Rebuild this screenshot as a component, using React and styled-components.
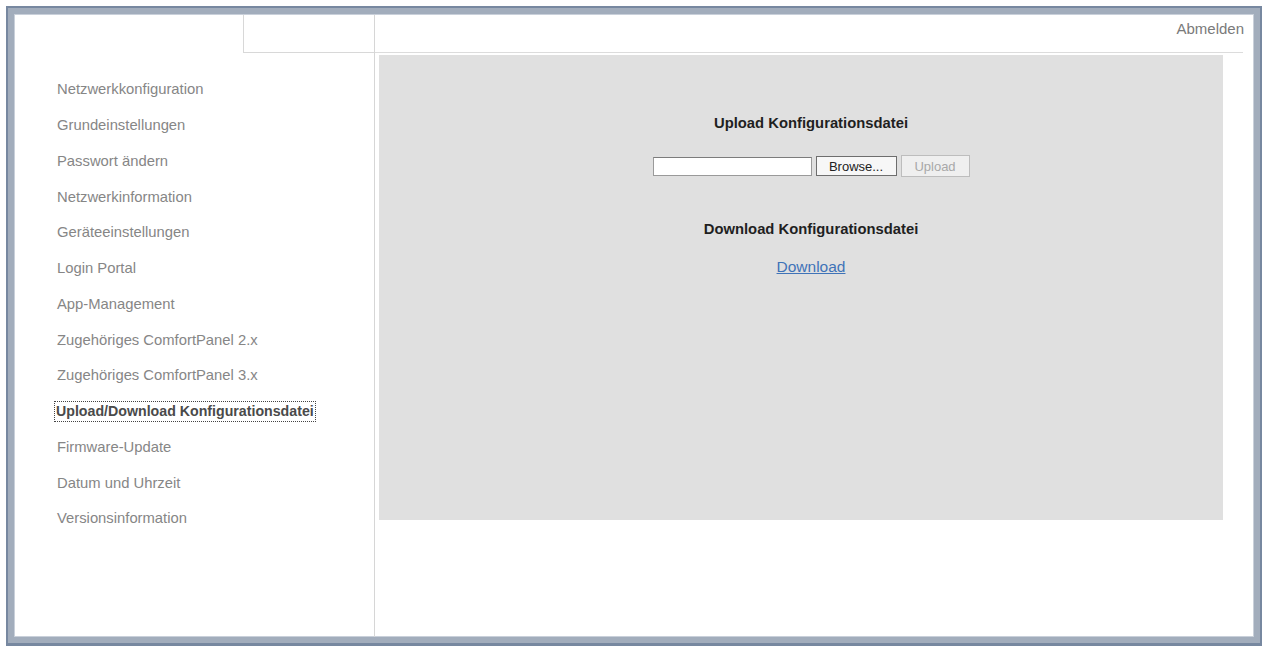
import React from "react";
import styled, { createGlobalStyle } from "styled-components";

const Global = createGlobalStyle`
  html, body { margin: 0; padding: 0; background: #ffffff; }
  body { font-family: "Liberation Sans", Arial, sans-serif; }
  * { box-sizing: border-box; }
`;

const Page = styled.div`
  width: 1268px;
  height: 648px;
  padding: 6px 6px 2px 6px;
  background: #ffffff;
`;

const Frame = styled.div`
  width: 100%;
  height: 100%;
  display: flex;
  border-style: solid;
  border-color: #7788a0;
  border-width: 2px 2px 3px 2px;
  box-shadow: inset 0 0 0 6px #a2adbc, inset 0 0 0 7px #c9d0da;
  padding: 7px 7px 6px 7px;
  background: #ffffff;
`;

const Sidebar = styled.aside`
  width: 360px;
  flex: none;
  display: flex;
  flex-direction: column;
  border-right: 1px solid #d6d6d6;
`;

const SideHead = styled.div`
  height: 38px;
  display: flex;
  justify-content: flex-end;
`;

const Tab = styled.div`
  width: 131px;
  height: 38px;
  border-left: 1px solid #d8d8d8;
  border-bottom: 1px solid #d8d8d8;
`;

const Nav = styled.nav`
  display: flex;
  flex-direction: column;
  padding: 19px 0 0 42px;
`;

const NavItem = styled.div`
  height: 35.75px;
  display: flex;
  align-items: center;
`;

const NavLabel = styled.span`
  display: inline-block;
  white-space: nowrap;
  font-size: ${(p) => (p.$active ? "14.2px" : "14.8px")};
  line-height: 17px;
  color: ${(p) => (p.$active ? "#4a4a4a" : "#868686")};
  font-weight: ${(p) => (p.$active ? "bold" : "normal")};
  outline: ${(p) => (p.$active ? "1px dotted #444" : "none")};
  outline-offset: 1px;
  margin-left: ${(p) => (p.$active ? "-1px" : "0")};
`;

const Main = styled.main`
  flex: 1;
  display: flex;
  flex-direction: column;
`;

const TopBar = styled.div`
  height: 38px;
  margin-right: 10px;
  border-bottom: 1px solid #dcdcdc;
  display: flex;
  justify-content: flex-end;
  align-items: flex-start;
  padding-top: 5px;
`;

const Logout = styled.a`
  font-size: 15px;
  color: #7a7a7a;
  text-decoration: none;
  margin-right: -1px;
`;

const Panel = styled.section`
  margin: 2px 30px 0 4px;
  height: 465px;
  background: #e0e0e0;
  display: flex;
  flex-direction: column;
  align-items: center;
  padding: 58px 0 0 20px;
`;

const Heading = styled.h3`
  margin: 0;
  font-size: 14.8px;
  line-height: 20px;
  font-weight: bold;
  color: #1f1f1f;
`;

const UploadRow = styled.div`
  display: flex;
  align-items: center;
  gap: 4px;
  margin: 22px 0 0 0;
`;

const FileInput = styled.div`
  width: 159px;
  height: 19px;
  background: #ffffff;
  border: 1px solid #9a9a9a;
  border-top-color: #7c7c7c;
`;

const Button = styled.button`
  height: ${(p) => (p.$disabled ? "22px" : "20px")};
  width: ${(p) => p.$w}px;
  padding: 0;
  font-family: "Liberation Sans", Arial, sans-serif;
  font-size: 13px;
  color: ${(p) => (p.$disabled ? "#a8a8a8" : "#222222")};
  background: ${(p) => (p.$disabled ? "#efefef" : "#f7f7f7")};
  border: 1px solid ${(p) => (p.$disabled ? "#bdbdbd" : "#6e6e6e")};
  border-radius: 0;
`;

const DownloadHeading = styled(Heading)`
  margin-top: 42px;
`;

const DownloadLink = styled.a`
  margin-top: 18px;
  font-size: 15.5px;
  line-height: 20px;
  color: #3f73b8;
  text-decoration: underline;
`;

const items = [
  "Netzwerkkonfiguration",
  "Grundeinstellungen",
  "Passwort ändern",
  "Netzwerkinformation",
  "Geräteeinstellungen",
  "Login Portal",
  "App-Management",
  "Zugehöriges ComfortPanel 2.x",
  "Zugehöriges ComfortPanel 3.x",
  "Upload/Download Konfigurationsdatei",
  "Firmware-Update",
  "Datum und Uhrzeit",
  "Versionsinformation",
];

export default function App() {
  return (
    <Page>
      <Global />
      <Frame>
        <Sidebar>
          <SideHead>
            <Tab />
          </SideHead>
          <Nav>
            {items.map((t, i) => (
              <NavItem key={t}>
                <NavLabel $active={i === 9}>{t}</NavLabel>
              </NavItem>
            ))}
          </Nav>
        </Sidebar>
        <Main>
          <TopBar>
            <Logout href="#">Abmelden</Logout>
          </TopBar>
          <Panel>
            <Heading>Upload Konfigurationsdatei</Heading>
            <UploadRow>
              <FileInput />
              <Button $w={81}>Browse...</Button>
              <Button $w={69} $disabled>Upload</Button>
            </UploadRow>
            <DownloadHeading>Download Konfigurationsdatei</DownloadHeading>
            <DownloadLink href="#">Download</DownloadLink>
          </Panel>
        </Main>
      </Frame>
    </Page>
  );
}
